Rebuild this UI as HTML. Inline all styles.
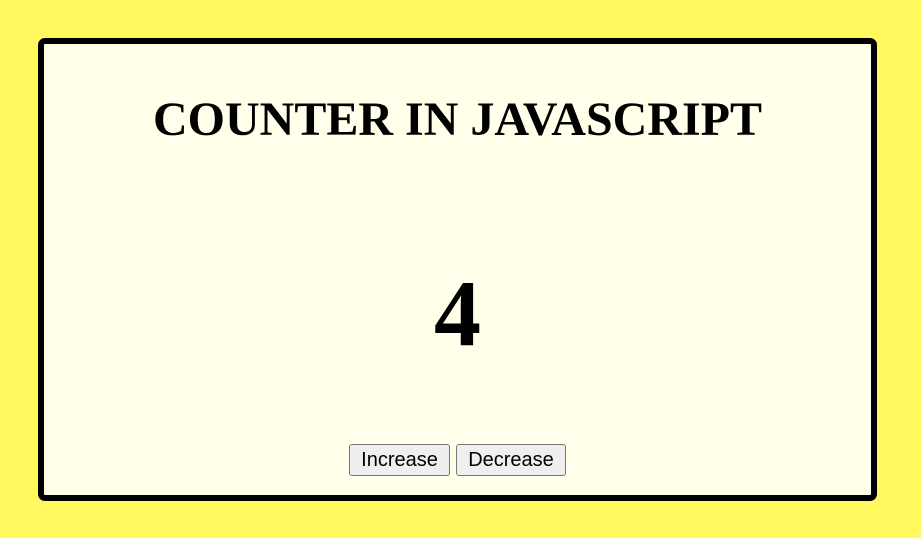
<!DOCTYPE html>
<html><head><style>
html,body{margin:0;padding:0;width:921px;height:538px;background:#fff95f;overflow:hidden}
.box{position:absolute;left:38px;top:38px;width:827px;height:451px;border:6px solid #000;border-radius:7px;background:#ffffea}
h1{position:absolute;left:0;right:0;top:46px;margin:0;text-align:center;font:bold 48px "Liberation Serif",serif;line-height:60px;color:#000}
.num{position:absolute;left:0;right:0;top:222px;text-align:center;font:bold 94px "Liberation Serif",serif;line-height:97px;color:#000}
.btns{position:absolute;left:0;right:0;top:400px;text-align:center;font-size:0}
button{font:20px "Liberation Sans",sans-serif;height:32px;padding:0 11px;margin:0 3px;background:#efefef;border:1px solid #767676;border-radius:3px;color:#000;vertical-align:top}
</style></head><body>
<div class="box">
<h1>COUNTER IN JAVASCRIPT</h1>
<div class="num">4</div>
<div class="btns"><button style="width:101px">Increase</button><button style="width:110px">Decrease</button></div>
</div>
</body></html>
